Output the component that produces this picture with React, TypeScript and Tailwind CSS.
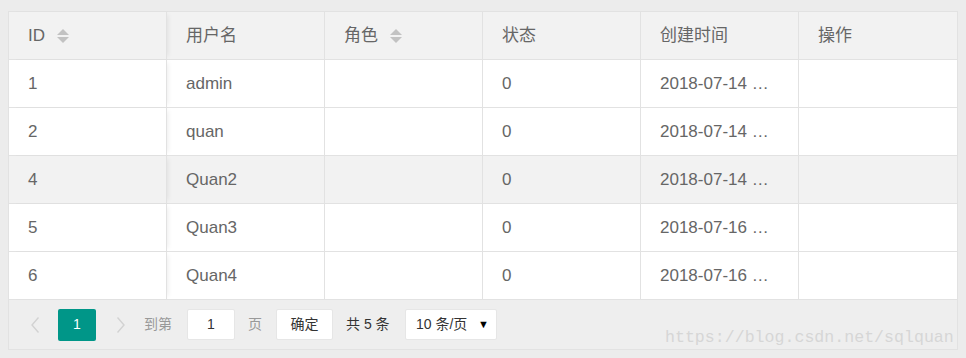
const columns = [
  { title: 'ID', sort: true },
  { title: '用户名' },
  { title: '角色', sort: true },
  { title: '状态' },
  { title: '创建时间' },
  { title: '操作' },
]

const rows = [
  { id: '1', name: 'admin', role: '', status: '0', time: '2018-07-14 …' },
  { id: '2', name: 'quan', role: '', status: '0', time: '2018-07-14 …' },
  { id: '4', name: 'Quan2', role: '', status: '0', time: '2018-07-14 …', hover: true },
  { id: '5', name: 'Quan3', role: '', status: '0', time: '2018-07-16 …' },
  { id: '6', name: 'Quan4', role: '', status: '0', time: '2018-07-16 …' },
]

function SortIcon() {
  return (
    <svg width="12" height="16" viewBox="0 0 12 16" className="ml-[12px]">
      <path d="M6 1 L12 7 L0 7 Z" fill="#c2c2c2" />
      <path d="M6 15 L12 9 L0 9 Z" fill="#c2c2c2" />
    </svg>
  )
}

function Cell({ children, first, last }: { children?: React.ReactNode; first?: boolean; last?: boolean }) {
  return (
    <div
      className={
        'flex items-center h-full pl-[19px] pr-[10px] whitespace-nowrap overflow-hidden ' +
        (last ? '' : 'border-r border-[#e2e2e2] ') +
        (first ? 'relative z-10 shadow-[4px_0_5px_-3px_rgba(0,0,0,0.08)]' : '')
      }
    >
      {children}
    </div>
  )
}

export default function App() {
  return (
    <div className="relative w-[966px] h-[358px] bg-[#ececec] pl-[8px] pt-[11px] font-['Liberation_Sans','Noto_Sans_CJK_SC',sans-serif]">
      <div className="w-[950px] border border-[#e2e2e2] bg-white text-[17px] text-[#666]">
        <div className="grid grid-cols-[158px_158px_158px_158px_158px_1fr] h-[48px] bg-[#f2f2f2] border-b border-[#e2e2e2]">
          {columns.map((c, i) => (
            <Cell key={c.title} first={i === 0} last={i === columns.length - 1}>
              <span>{c.title}</span>
              {c.sort && <SortIcon />}
            </Cell>
          ))}
        </div>
        {rows.map((r) => (
          <div
            key={r.id}
            className={
              'grid grid-cols-[158px_158px_158px_158px_158px_1fr] h-[48px] border-b border-[#e2e2e2] ' +
              (r.hover ? 'bg-[#f2f2f2]' : 'bg-white')
            }
          >
            <Cell first>{r.id}</Cell>
            <Cell>{r.name}</Cell>
            <Cell>{r.role}</Cell>
            <Cell>{r.status}</Cell>
            <Cell>{r.time}</Cell>
            <Cell last />
          </div>
        ))}
        <div className="flex items-center h-[49px] bg-[#eeeeee] pl-[22px] text-[14px]">
          <svg width="8" height="16" viewBox="0 0 8 16">
            <path d="M7.5 0.5 L1 8 L7.5 15.5" fill="none" stroke="#d2d2d2" strokeWidth="1.4" />
          </svg>
          <div className="ml-[19px] w-[38px] h-[32px] rounded-[2px] bg-[#009688] text-white flex items-center justify-center">1</div>
          <svg width="8" height="16" viewBox="0 0 8 16" className="ml-[21px]">
            <path d="M0.5 0.5 L7 8 L0.5 15.5" fill="none" stroke="#d2d2d2" strokeWidth="1.4" />
          </svg>
          <span className="ml-[19px] w-[28px] text-[#999]">到第</span>
          <div className="ml-[15px] w-[48px] h-[31px] bg-white border border-[#e6e6e6] rounded-[2px] flex items-center justify-center text-[#333]">1</div>
          <span className="ml-[13px] w-[14px] text-[#999]">页</span>
          <div className="ml-[14px] w-[57px] h-[31px] bg-white border border-[#e6e6e6] rounded-[2px] flex items-center justify-center text-[#333]">确定</div>
          <span className="ml-[13px] w-[47px] whitespace-nowrap text-[#333]">共 5 条</span>
          <div className="ml-[12px] w-[92px] h-[31px] bg-white border border-[#e6e6e6] rounded-[2px] flex items-center pl-[10px] pr-[7px] text-[#333]">
            <span>10 条/页</span>
            <span className="ml-auto text-[11px] text-black">▼</span>
          </div>
        </div>
      </div>
      <div className="absolute left-[665px] top-[326px] text-[16.6px] leading-[24px] text-[#d6d6d6] font-['Liberation_Mono',monospace]">
        https://blog.csdn.net/sqlquan
      </div>
    </div>
  )
}
